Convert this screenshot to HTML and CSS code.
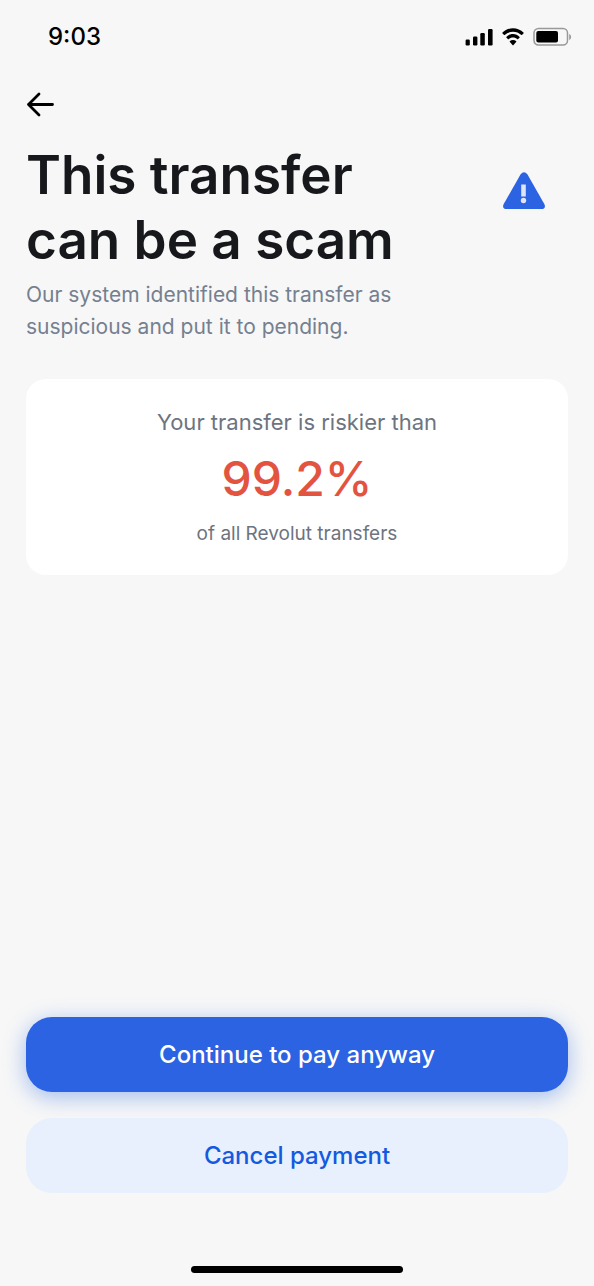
FILE: index.html
```html
<!DOCTYPE html>
<html lang="en">
<head>
<meta charset="utf-8">
<meta name="viewport" content="width=device-width, initial-scale=1">
<title>Transfer warning</title>
<link rel="stylesheet" href="styles.css">
</head>
<body>
<div class="screen">
  <div class="status">
    <span class="time">9:03</span>
    <span class="status-icons">
      <svg width="28" height="18" viewBox="0 0 28 18"><rect x=".6" y="11.500" width="4.200" height="6" rx="1.200"/><rect x="8" y="8.500" width="4.400" height="9" rx="1.200"/><rect x="15.300" y="5" width="4.500" height="12.500" rx="1.200"/><rect x="23" y="1" width="4.600" height="16.500" rx="1.200"/></svg>
      <svg width="24" height="18" viewBox="0 0 24 18"><path d="M12 3.800c3.200 0 6.100 1.200 8.400 3.300l.5 0 1.800-1.800 0-.5C19.800 2 16.100.300 12 .300S4.200 2 1.300 4.800l0 .5 1.800 1.800.5 0C5.900 5 8.800 3.800 12 3.800z"/><path d="M12 9.600c1.700 0 3.200.6 4.400 1.700l.5 0 1.800-1.800 0-.5C16.900 7.200 14.600 6.100 12 6.100S7.100 7.200 5.300 9l0 .5 1.800 1.800.5 0c1.200-1.100 2.700-1.700 4.400-1.700z"/><path d="M15.300 13.300l0 .5L12.300 17.200l-.6 0L8.700 13.800l0-.5c1.900-1.700 4.700-1.700 6.600 0z"/></svg>
      <svg width="39" height="20" viewBox="0 0 39 20"><rect x="1" y="1.500" width="33.500" height="16.500" rx="4.500" fill="none" stroke="#999" stroke-width="1.500"/><rect x="3.300" y="4" width="21.700" height="11.500" rx="2"/><path d="M36.200 7v6c2.500-1 2.500-5 0-6z" fill="#999"/></svg>
    </span>
  </div>
  <header class="header">
    <button class="back" aria-label="Back"><svg width="28" height="26" viewBox="0 0 28 26"><path d="M26.500 13.500H2.500M13 3L2.500 13.500L13 24" fill="none" stroke="#000" stroke-width="2.800" stroke-linecap="round" stroke-linejoin="round"/></svg></button>
    <div class="heading">
      <h1>This transfer<br>can be a scam</h1>
      <svg class="warning" width="44" height="40" viewBox="0 0 44 40"><path d="M18.500 3.500Q22 -1 25.500 3.500L42.300 33Q44.500 38 39 38H5Q-.5 38 1.700 33z" fill="#2b63e3"/><path d="M21.500 13.500v12" stroke="#dfe5f7" stroke-width="4.600"/><circle cx="21.500" cy="29.500" r="2.700" fill="#dfe5f7"/></svg>
    </div>
    <p class="lead">Our system identified this transfer as<br>suspicious and put it to pending.</p>
  </header>
  <section class="card">
    <p class="label">Your transfer is riskier than</p>
    <p class="value">99.2%</p>
    <p class="note">of all Revolut transfers</p>
  </section>
  <footer class="actions">
    <button class="btn primary">Continue to pay anyway</button>
    <button class="btn secondary">Cancel payment</button>
  </footer>
  <div class="home"></div>
</div>
</body>
</html>
```
FILE: styles.css
```css
* { box-sizing: border-box; }
body { margin: 0; background: #f7f7f7; font-family: Inter, "Liberation Sans", sans-serif; color: #17181c; }
h1, p { margin: 0; }
button { border: 0; font: inherit; cursor: pointer; }
svg { display: block; }
.screen { min-height: 100vh; display: flex; flex-direction: column; padding: 0 26px; }
.status { display: flex; justify-content: space-between; align-items: center; height: 73px; padding-left: 22px; margin-right: -4px; color: #000; }
.time { font-size: 24px; font-weight: 500; }
.status-icons { display: flex; align-items: center; gap: 8px; }
.back { display: block; padding: 0; margin-top: 18px; background: none; }
.heading { display: flex; justify-content: space-between; align-items: flex-start; margin-top: 26px; }
h1 { font-size: 53px; line-height: 65px; font-weight: 600; }
.warning { margin: 28px 22px 0 0; }
.lead { margin-top: 6px; font-size: 21px; line-height: 32px; color: #75808f; }
.card { margin-top: 36px; padding: 28px 20px; background: #fff; border-radius: 20px; text-align: center; color: #6d7480; }
.label { font-size: 22px; line-height: 30px; }
.value { margin-top: 8px; font-size: 48px; line-height: 68px; font-weight: 500; color: #e35440; }
.note { margin-top: 8px; font-size: 19px; line-height: 26px; }
.actions { display: grid; gap: 26px; margin-top: auto; }
.btn { height: 75px; border-radius: 26px; font-size: 24px; font-weight: 500; }
.primary { background: #2b63e3; color: #fff; box-shadow: 0 5px 22px #2b6ce36b; }
.secondary { background: #e7f0fc; color: #1459df; }
.home { width: 212px; height: 7px; margin: 73px auto 13px; border-radius: 4px; background: #000; }
```
